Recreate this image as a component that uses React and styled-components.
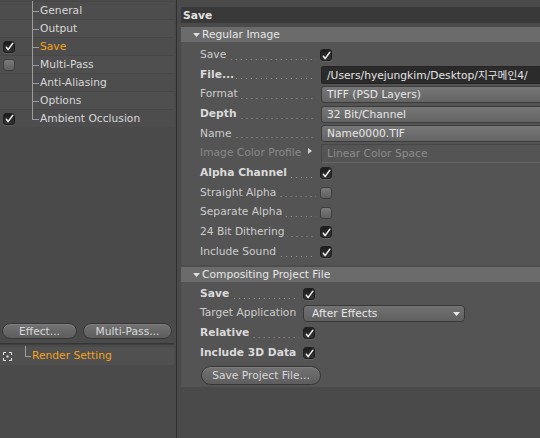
import React from 'react';
import styled, { createGlobalStyle, css } from 'styled-components';

const Global = createGlobalStyle`
  html, body { margin: 0; padding: 0; background: #4a4a4a; }
  body {
    font-family: "DejaVu Sans", "Noto Sans CJK KR", sans-serif;
    font-size: 10.7px;
    -webkit-font-smoothing: antialiased;
  }
  * { box-sizing: border-box; }
`;

const Shell = styled.div`
  display: flex;
  width: 540px;
  height: 438px;
  overflow: hidden;
  background: #4a4a4a;
`;

/* ---------- left panel ---------- */

const LeftPanel = styled.div`
  width: 177px;
  flex: none;
  display: flex;
  flex-direction: column;
  border-right: 1px solid #2f2f2f;
  padding-bottom: 73px;
`;

const TreeList = styled.div`
  width: 174px;
  padding-top: 1px;
  display: flex;
  flex-direction: column;
`;

const TreeRow = styled.div`
  height: 18px;
  display: flex;
  align-items: center;
  background: ${p => (p.$alt ? '#4f4f4f' : '#4d4d4d')};
  border-top: 1px solid #474747;
`;

const CheckCell = styled.div`
  width: ${p => p.$w}px;
  flex: none;
  display: flex;
  align-items: center;
  padding-left: 3px;
`;

const Guide = styled.span`
  width: ${p => p.$w}px;
  flex: none;
  align-self: stretch;
  position: relative;
  &::before {
    content: '';
    position: absolute;
    left: 0;
    top: -1px;
    bottom: ${p => (p.$last ? '50%' : '-1px')};
    border-left: 1px solid #9c9c9c;
  }
  &::after {
    content: '';
    position: absolute;
    left: 0;
    top: 50%;
    width: ${p => p.$w - 1}px;
    border-top: 1px solid #9c9c9c;
  }
`;

const TreeLabel = styled.span`
  color: ${p => (p.$active ? '#f4a31c' : '#d8d8d8')};
  white-space: nowrap;
  line-height: 1;
  padding-top: 1px;
`;

const ButtonBar = styled.div`
  margin-top: auto;
  display: flex;
  gap: 6px;
  padding-left: 2px;
`;

const PillButton = styled.button`
  width: ${p => p.$w}px;
  height: ${p => p.$h || 16}px;
  margin-left: ${p => p.$indent || 0}px;
  border-radius: 10px;
  border: 1px solid #363636;
  background: linear-gradient(#737373, #5d5d5d);
  color: #d8d8d8;
  font: inherit;
  padding: 0;
  display: flex;
  align-items: center;
  justify-content: center;
  box-shadow: inset 0 1px 0 rgba(255,255,255,0.08);
`;

const Separator = styled.div`
  width: 174px;
  margin-top: 4px;
  height: 2px;
  border-top: 1px solid #353535;
  border-bottom: 1px solid #404040;
`;

const RenderRow = styled.div`
  width: 174px;
  margin-top: 2px;
  height: 18px;
  display: flex;
  align-items: center;
  background: #505050;
`;

/* ---------- right panel ---------- */

const RightPanel = styled.div`
  flex: 1;
  min-width: 0;
  overflow: hidden;
  padding: 7px 0 0 4px;
  display: flex;
  flex-direction: column;
`;

const Inner = styled.div`
  width: 420px;
  display: flex;
  flex-direction: column;
`;

const TitleBar = styled.div`
  height: 16px;
  background: #393939;
  color: #e2e2e2;
  font-weight: bold;
  display: flex;
  align-items: center;
  padding-left: 2px;
`;

const Content = styled.div`
  margin-top: 4px;
  height: 360px;
  background: #545454;
  display: flex;
  flex-direction: column;
`;

const SectionHeader = styled.div`
  height: 16px;
  background: #6b6b6b;
  color: #e6e6e6;
  display: flex;
  align-items: center;
  gap: 2px;
  padding-left: 12px;
  ${p => p.$following && css`
    margin-top: 3px;
    border-top: 2px solid #4c4c4c;
    height: 18px;
  `}
`;

const Rows = styled.div`
  padding-top: ${p => p.$top}px;
  display: flex;
  flex-direction: column;
`;

const Row = styled.div`
  height: ${p => p.$h || 19.7}px;
  display: flex;
  align-items: center;
  padding-left: 19px;
`;

const LabelCell = styled.div`
  width: ${p => p.$w}px;
  flex: none;
  display: flex;
  align-items: center;
  padding-right: 4px;
`;

const Label = styled.span`
  white-space: nowrap;
  line-height: 1;
  font-weight: ${p => (p.$bold ? 'bold' : 'normal')};
  color: ${p => (p.$disabled ? '#8a8a8a' : p.$bold ? '#dadada' : '#cdcdcd')};
`;

const Leader = styled.span`
  flex: 1;
  height: 1px;
  margin: 8px 0 0 2px;
  background-image: linear-gradient(to right, #959595 1px, transparent 1px);
  background-size: 5px 1px;
  background-repeat: repeat-x;
  background-position: right 0 top 0;
`;

const SubArrow = styled.span`
  margin-left: auto;
  margin-right: 4px;
  margin-top: -6px;
  display: flex;
`;

const Box = styled.span`
  width: 12px;
  height: 12px;
  flex: none;
  border-radius: 3px;
  display: flex;
  align-items: center;
  justify-content: center;
  ${p => p.$on
    ? css`
        background: linear-gradient(#1c1c1c, #333333);
        border: 1px solid #202020;
        box-shadow: 0 1px 0 rgba(255,255,255,0.08);
      `
    : css`
        background: linear-gradient(#7b7b7b, #5f5f5f);
        border: 1px solid #3d3d3d;
      `}
`;

const PathField = styled.div`
  margin-left: 1px;
  width: 260px;
  height: 18px;
  flex: none;
  background: #2b2b2b;
  border: 1px solid #252525;
  border-radius: 2px;
  color: #e4e4e4;
  display: flex;
  align-items: center;
  padding-left: 5px;
  white-space: nowrap;
`;

const ValueButton = styled.div`
  margin-left: 1px;
  width: 260px;
  height: 17px;
  flex: none;
  background: linear-gradient(#777777, #646464);
  border: 1px solid #3b3b3b;
  border-radius: 3px;
  color: #e6e6e6;
  display: flex;
  align-items: center;
  padding-left: 5px;
  white-space: nowrap;
`;

const DisabledField = styled.div`
  margin-left: 1px;
  width: 260px;
  height: 19px;
  flex: none;
  border-left: 1px solid #474747;
  border-top: 1px solid #474747;
  border-bottom: 1px solid #676767;
  color: #8c8c8c;
  display: flex;
  align-items: center;
  padding-left: 5px;
  white-space: nowrap;
`;

const Dropdown = styled.div`
  width: 162px;
  height: 17px;
  flex: none;
  background: linear-gradient(#727272, #5f5f5f);
  border: 1px solid #393939;
  border-radius: 4px;
  color: #e6e6e6;
  display: flex;
  align-items: center;
  justify-content: space-between;
  padding: 0 4px 0 8px;
  white-space: nowrap;
`;

/* ---------- icons ---------- */

const Check = () => (
  <svg width="9" height="9" viewBox="0 0 9 9">
    <path d="M1.4 5.2 L3.1 7.6 L7.8 1.2" fill="none" stroke="#ececec" strokeWidth="1.5" strokeLinecap="round" strokeLinejoin="round" />
  </svg>
);

const CheckBox = ({ on }) => <Box $on={on}>{on && <Check />}</Box>;

const DownTri = ({ color = '#e0e0e0' }) => (
  <svg width="7" height="4" viewBox="0 0 7 4"><path d="M0 0 H7 L3.5 4 Z" fill={color} /></svg>
);

const RightTri = () => (
  <svg width="4" height="6" viewBox="0 0 4 6"><path d="M0 0 L4 3 L0 6 Z" fill="#d0d0d0" /></svg>
);

const RenderIcon = () => (
  <svg width="9" height="9" viewBox="0 0 9 9">
    <path d="M0.5 3 V0.5 H3 M6 0.5 H8.5 V3 M8.5 6 V8.5 H6 M3 8.5 H0.5 V6" fill="none" stroke="#e8e8e8" strokeWidth="1" />
    <rect x="3.5" y="3.5" width="2" height="2" fill="#e8e8e8" />
  </svg>
);

/* ---------- data ---------- */

const treeItems = [
  { label: 'General' },
  { label: 'Output' },
  { label: 'Save', active: true, check: true },
  { label: 'Multi-Pass', check: false },
  { label: 'Anti-Aliasing' },
  { label: 'Options' },
  { label: 'Ambient Occlusion', check: true },
];

const LabelWithDots = ({ w, children, bold, disabled, dots = true, arrow }) => (
  <LabelCell $w={w}>
    <Label $bold={bold} $disabled={disabled}>{children}</Label>
    {dots && <Leader />}
    {arrow && <SubArrow><RightTri /></SubArrow>}
  </LabelCell>
);

export default function App() {
  return (
    <>
      <Global />
      <Shell>
        <LeftPanel>
          <TreeList>
            {treeItems.map((it, i) => (
              <TreeRow key={it.label} $alt={i % 2 === 1}>
                <CheckCell $w={32}>
                  {it.check !== undefined && <CheckBox on={it.check} />}
                </CheckCell>
                <Guide $w={8} $last={i === treeItems.length - 1} />
                <TreeLabel $active={it.active}>{it.label}</TreeLabel>
              </TreeRow>
            ))}
          </TreeList>

          <ButtonBar>
            <PillButton $w={75}>Effect...</PillButton>
            <PillButton $w={89}>Multi-Pass...</PillButton>
          </ButtonBar>
          <Separator />
          <RenderRow>
            <CheckCell $w={25}><RenderIcon /></CheckCell>
            <Guide $w={7} $last />
            <TreeLabel $active>Render Setting</TreeLabel>
          </RenderRow>
        </LeftPanel>

        <RightPanel>
          <Inner>
            <TitleBar>Save</TitleBar>
            <Content>
              <SectionHeader><DownTri />Regular Image</SectionHeader>
              <Rows $top={3}>
                <Row>
                  <LabelWithDots w={120}>Save</LabelWithDots>
                  <CheckBox on />
                </Row>
                <Row>
                  <LabelWithDots w={120} bold>File...</LabelWithDots>
                  <PathField>/Users/hyejungkim/Desktop/지구메인4/</PathField>
                </Row>
                <Row>
                  <LabelWithDots w={120}>Format</LabelWithDots>
                  <ValueButton>TIFF (PSD Layers)</ValueButton>
                </Row>
                <Row>
                  <LabelWithDots w={120} bold>Depth</LabelWithDots>
                  <ValueButton>32 Bit/Channel</ValueButton>
                </Row>
                <Row>
                  <LabelWithDots w={120}>Name</LabelWithDots>
                  <ValueButton>Name0000.TIF</ValueButton>
                </Row>
                <Row>
                  <LabelWithDots w={120} disabled dots={false} arrow>Image Color Profile</LabelWithDots>
                  <DisabledField>Linear Color Space</DisabledField>
                </Row>
                <Row>
                  <LabelWithDots w={120} bold>Alpha Channel</LabelWithDots>
                  <CheckBox on />
                </Row>
                <Row>
                  <LabelWithDots w={120}>Straight Alpha</LabelWithDots>
                  <CheckBox on={false} />
                </Row>
                <Row>
                  <LabelWithDots w={120}>Separate Alpha</LabelWithDots>
                  <CheckBox on={false} />
                </Row>
                <Row>
                  <LabelWithDots w={120}>24 Bit Dithering</LabelWithDots>
                  <CheckBox on />
                </Row>
                <Row>
                  <LabelWithDots w={120}>Include Sound</LabelWithDots>
                  <CheckBox on />
                </Row>
              </Rows>

              <SectionHeader $following><DownTri />Compositing Project File</SectionHeader>
              <Rows $top={2}>
                <Row>
                  <LabelWithDots w={103} bold>Save</LabelWithDots>
                  <CheckBox on />
                </Row>
                <Row>
                  <LabelWithDots w={103} dots={false}>Target Application</LabelWithDots>
                  <Dropdown>After Effects<DownTri color="#e8e8e8" /></Dropdown>
                </Row>
                <Row>
                  <LabelWithDots w={103} bold>Relative</LabelWithDots>
                  <CheckBox on />
                </Row>
                <Row>
                  <LabelWithDots w={103} bold dots={false}>Include 3D Data</LabelWithDots>
                  <CheckBox on />
                </Row>
                <Row $h={24}>
                  <PillButton $w={120} $h={19} $indent={1}>Save Project File...</PillButton>
                </Row>
              </Rows>
            </Content>
          </Inner>
        </RightPanel>
      </Shell>
    </>
  );
}
